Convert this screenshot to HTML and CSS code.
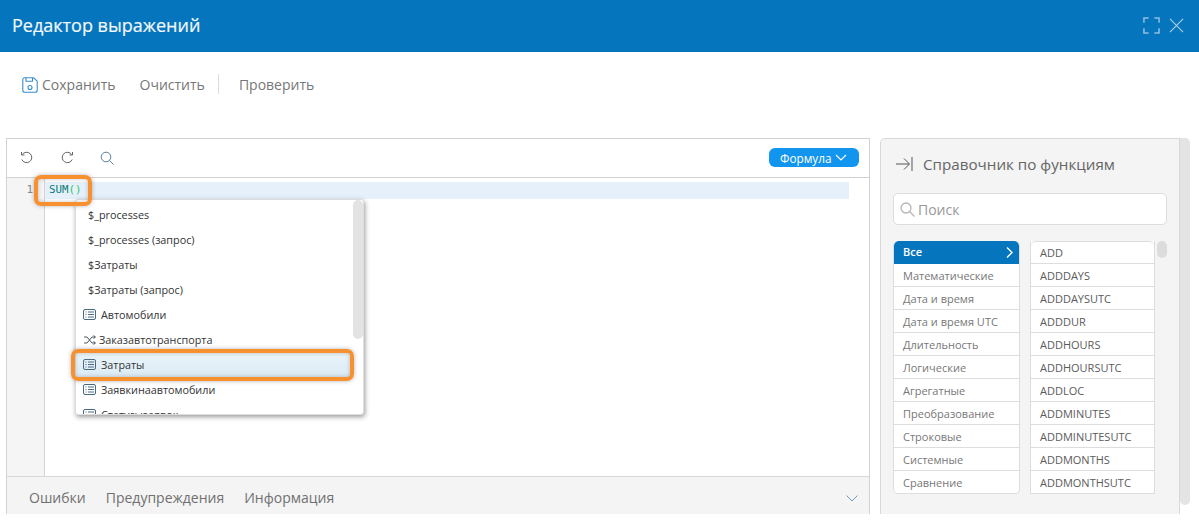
FILE: index.html
```html
<!DOCTYPE html>
<html lang="ru">
<head>
<meta charset="utf-8">
<title>Редактор выражений</title>
<link rel="stylesheet" href="styles.css">
</head>
<body>
<div class="page">
  <header class="head">
    <h1 class="head-title">Редактор выражений</h1>
    <div class="head-icons">
      <svg width="17" height="17" viewBox="0 0 18 18" fill="none" stroke="#8fbfe0" stroke-width="1.6"><path d="M1 6V1h5M12 1h5v5M17 12v5h-5M6 17H1v-5"/></svg>
      <svg width="15" height="15" viewBox="0 0 16 16" fill="none" stroke="#a5cce6" stroke-width="1.3"><path d="M1 1l14 14M15 1L1 15"/></svg>
    </div>
  </header>
  <div class="toolbar">
    <button class="tool save">
      <svg width="16" height="16" viewBox="0 0 16 16" fill="none" stroke="#3a8fc9" stroke-width="1.1"><path d="M2.5.8h9.2l3.5 3.4v9a2 2 0 0 1-2 2H2.800a2 2 0 0 1-2-2V2.500a1.700 1.700 0 0 1 1.700-1.700z"/><path d="M4 1v3.300h6.500V1"/><circle cx="8" cy="10.500" r="2"/></svg>
      Сохранить
    </button>
    <button class="tool clear">Очистить</button>
    <span class="tool-sep"></span>
    <button class="tool check">Проверить</button>
  </div>
  <main class="content">
    <section class="editor">
      <div class="ed-bar">
        <svg class="ed-icon" width="14" height="14" viewBox="0 0 14 14" fill="none" stroke="#666" stroke-width="1"><path d="M2.300 3.500A5.200 5.200 0 1 1 1.800 8.500"/><path d="M1.500 1v3h3"/></svg>
        <svg class="ed-icon" width="14" height="14" viewBox="0 0 14 14" fill="none" stroke="#666" stroke-width="1"><path d="M11.700 3.500A5.200 5.200 0 1 0 12.200 8.500"/><path d="M12.500 1v3h-3"/></svg>
        <svg class="ed-icon" width="14" height="14" viewBox="0 0 14 14" fill="none" stroke="#5a7f9c" stroke-width="1"><circle cx="6" cy="6" r="4.800"/><path d="M9.500 9.500l4 4"/></svg>
        <button class="formula">Формула
          <svg width="12" height="7" viewBox="0 0 12 7" fill="none" stroke="#fff" stroke-width="1.200"><path d="M1 1l5 5 5-5"/></svg>
        </button>
      </div>
      <div class="ed-body">
        <div class="gutter">1</div>
        <div class="code">
          <div class="code-line"><span class="c-fn">SUM</span><span class="c-br">()</span></div>
          <div class="popup">
            <ul class="popup-list">
              <li class="pop-item plain">$_processes</li>
              <li class="pop-item plain">$_processes (запрос)</li>
              <li class="pop-item plain">$Затраты</li>
              <li class="pop-item plain">$Затраты (запрос)</li>
              <li class="pop-item"><svg class="tbl" width="13" height="11" viewBox="0 0 13 11" fill="none" stroke="#4a6a82"><rect x=".5" y=".5" width="12" height="10" rx="1.500"/><path d="M2.500 3h1M5 3h6M2.500 5.500h1M5 5.500h6M2.500 8h1M5 8h6"/></svg>Автомобили</li>
              <li class="pop-item"><svg class="shuf" width="12" height="10" viewBox="0 0 12 10" fill="none" stroke="#4a5a66"><path d="M0 2h3l5 6h3M0 8h3l5-6h3M9.500.5L11.500 2 9.500 3.500M9.500 6.500L11.500 8 9.500 9.500"/></svg>Заказавтотранспорта</li>
              <li class="pop-item selected"><svg class="tbl" width="13" height="11" viewBox="0 0 13 11" fill="none" stroke="#4a6a82"><rect x=".5" y=".5" width="12" height="10" rx="1.500"/><path d="M2.500 3h1M5 3h6M2.500 5.500h1M5 5.500h6M2.500 8h1M5 8h6"/></svg>Затраты</li>
              <li class="pop-item"><svg class="tbl" width="13" height="11" viewBox="0 0 13 11" fill="none" stroke="#4a6a82"><rect x=".5" y=".5" width="12" height="10" rx="1.500"/><path d="M2.500 3h1M5 3h6M2.500 5.500h1M5 5.500h6M2.500 8h1M5 8h6"/></svg>Заявкинаавтомобили</li>
              <li class="pop-item"><svg class="tbl" width="13" height="11" viewBox="0 0 13 11" fill="none" stroke="#4a6a82"><rect x=".5" y=".5" width="12" height="10" rx="1.500"/><path d="M2.500 3h1M5 3h6M2.500 5.500h1M5 5.500h6M2.500 8h1M5 8h6"/></svg>Статусызаявок</li>
            </ul>
            <span class="pop-scroll"></span>
          </div>
          <span class="mark mark-sum"></span>
          <span class="mark mark-item"></span>
        </div>
      </div>
      <div class="ed-foot">
        <span>Ошибки</span><span>Предупреждения</span><span>Информация</span>
        <svg class="foot-chev" width="12" height="7" viewBox="0 0 12 7" fill="none" stroke="#6d9dc0"><path d="M.5.500L6 6 11.500.500"/></svg>
      </div>
    </section>
    <aside class="ref">
      <div class="ref-head">
        <svg width="17" height="14" viewBox="0 0 17 14" fill="none" stroke="#555"><path d="M0 7h13M8 1.500L13.500 7 8 12.500M16 0v14"/></svg>
        <h2 class="ref-title">Справочник по функциям</h2>
      </div>
      <div class="ref-search">
        <svg width="15" height="15" viewBox="0 0 15 15" fill="none" stroke="#b5b5b5" stroke-width="1.300"><circle cx="6" cy="6" r="5"/><path d="M9.500 9.500l5 5"/></svg>
        <span>Поиск</span>
      </div>
      <div class="ref-cols">
        <ul class="cats">
          <li class="active">Все<svg width="7" height="11" viewBox="0 0 7 11" fill="none" stroke="#fff" stroke-width="1.400"><path d="M1 .5l5 5-5 5"/></svg></li>
          <li>Математические</li><li>Дата и время</li><li>Дата и время UTC</li><li>Длительность</li><li>Логические</li><li>Агрегатные</li><li>Преобразование</li><li>Строковые</li><li>Системные</li><li>Сравнение</li>
        </ul>
        <ul class="funcs">
          <li>ADD</li><li>ADDDAYS</li><li>ADDDAYSUTC</li><li>ADDDUR</li><li>ADDHOURS</li><li>ADDHOURSUTC</li><li>ADDLOC</li><li>ADDMINUTES</li><li>ADDMINUTESUTC</li><li>ADDMONTHS</li><li>ADDMONTHSUTC</li>
        </ul>
        <span class="func-scroll"></span>
      </div>
    </aside>
    <span class="page-scroll"></span>
  </main>
</div>
</body>
</html>
```
FILE: styles.css
```css
* { box-sizing: border-box; }
html, body { margin: 0; padding: 0; background: #fff; }
body { width: 1199px; height: 522px; overflow: hidden; font-family: "Open Sans", "Noto Sans", sans-serif; color: #666; }
ul { list-style: none; margin: 0; padding: 0; }
button { font: inherit; background: none; border: 0; padding: 0; color: inherit; }
.head { height: 52px; background: #0575bd; display: flex; align-items: center; justify-content: space-between; padding: 0 15px 2px 12px; }
.head-title { margin: 0; font-size: 18px; font-weight: 500; color: #f2f8fc; line-height: 24px; -webkit-text-stroke: .2px #f2f8fc; }
.head-icons { display: flex; align-items: center; gap: 9px; }
.toolbar { height: 86px; padding: 22px 0 0 22px; display: flex; align-items: flex-start; font-size: 14px; color: #777; }
.tool { display: flex; align-items: center; height: 22px; line-height: 22px; white-space: nowrap; }
.save svg { margin-right: 4px; }
.save { margin-right: 24px; }
.clear { margin-right: 13px; }
.tool-sep { width: 1px; height: 20px; background: #ddd; margin: 0 20px 0 0; }
.content { display: flex; align-items: flex-start; padding-left: 6px; }
.editor { width: 864px; height: 376px; border: 1px solid #d2d2d2; border-bottom: 0; display: flex; flex-direction: column; }
.ed-bar { height: 39px; flex: none; border-bottom: 1px solid #d2d2d2; display: flex; align-items: center; padding: 0 10px 1px 13px; gap: 26px; }
.formula { margin-left: auto; display: flex; align-items: center; gap: 3px; height: 19px; width: 90px; padding: 0 6px 0 11px; border-radius: 6px; background: #1295ee; color: #fff; font-size: 11.800px; font-weight: 500; }
.ed-body { flex: 1; display: flex; min-height: 0; }
.gutter { width: 38px; flex: none; background: #f5f5f5; border-right: 1px solid #d5d5d5; font: 11px/24px "DejaVu Sans Mono", monospace; color: #888; text-align: right; padding-right: 11px; }
.code { flex: 1; position: relative; padding-top: 4px; }
.code-line { height: 17px; width: 804px; background: #e6f0fb; font: 10.800px/16px "DejaVu Sans Mono", monospace; padding-left: 4px; }
.c-fn { color: #0a7a78; }
.c-br { color: #35c45a; }
.mark { position: absolute; border: 4px solid #f7902e; border-radius: 7px; box-shadow: 0 0 4px rgba(90, 90, 90, .45), inset 0 0 4px rgba(90, 90, 90, .35); pointer-events: none; }
.mark-sum { left: -11px; top: -3px; width: 58px; height: 31px; }
.mark-item { left: 26px; top: 171px; width: 283px; height: 32px; }
.popup { position: absolute; left: 30px; top: 21px; width: 289px; height: 216px; background: #fff; border: 1px solid #ddd; border-radius: 3px; box-shadow: 1px 2px 5px rgba(0, 0, 0, .4); overflow: hidden; padding-top: 2px; }
.popup-list { font-size: 10.800px; color: #333; }
.pop-item { height: 25px; line-height: 25px; padding-left: 7px; display: flex; align-items: center; white-space: nowrap; }
.pop-item svg { flex: none; margin-right: 5px; }
.pop-item .shuf { margin-right: 3px; margin-left: 1px; margin-top: 1px; }
.pop-item.plain { padding-left: 12px; }
.selected { background: linear-gradient(#eaf4fa, #dcebf5); width: 276px; }
.pop-scroll { position: absolute; right: 0; top: 0; width: 10px; height: 139px; background: #e3e3e3; border-radius: 5px; }
.ed-foot { height: 38px; flex: none; background: #f4f4f4; border-top: 1px solid #d5d8dc; display: flex; align-items: center; gap: 20px; padding: 3px 11px 0 22px; font-size: 14px; color: #707070; }
.foot-chev { margin-left: auto; margin-top: 3px; }
.ref { width: 300px; height: 376px; margin-left: 10px; background: #f4f4f4; border: 1px solid #d8d8d8; border-bottom: 0; border-radius: 5px 0 0 0; padding: 0 12px; }
.ref-head { height: 54px; display: flex; align-items: center; gap: 10px; padding: 0 0 4px 3px; }
.ref-title { margin: 0; font-size: 15.200px; font-weight: 400; color: #666; }
.ref-search { height: 32px; background: #fff; border: 1px solid #ddd; border-radius: 5px; display: flex; align-items: center; gap: 3px; padding-left: 6px; font-size: 14px; color: #999; }
.ref-cols { position: relative; display: flex; gap: 10px; margin-top: 16px; font-size: 11px; }
.cats, .funcs { background: #fff; border: 1px solid #ddd; border-top: 0; height: 253px; }
.cats { width: 127px; border-radius: 5px; color: #777; }
.funcs { width: 125px; color: #5b5b5b; }
.cats li, .funcs li { height: 23px; line-height: 24px; padding-left: 9px; border-bottom: 1px solid #ddd; }
.cats li:last-child { border-bottom: 0; }
.funcs li:first-child { border-top: 1px solid #ddd; border-radius: 5px 5px 0 0; line-height: 22px; }
.cats li.active { background: #0575bd; color: #fff; font-weight: 600; border-radius: 5px 5px 0 0; border-bottom-color: #0575bd; display: flex; align-items: center; justify-content: space-between; padding-right: 6px; }
.func-scroll { position: absolute; left: 264px; top: 0; width: 10px; height: 17px; border-radius: 5px; background: #dcdcdc; }
.page-scroll { width: 10px; height: 367px; background: #e4e4e4; border-radius: 0 5px 5px 5px; flex: none; }
```
